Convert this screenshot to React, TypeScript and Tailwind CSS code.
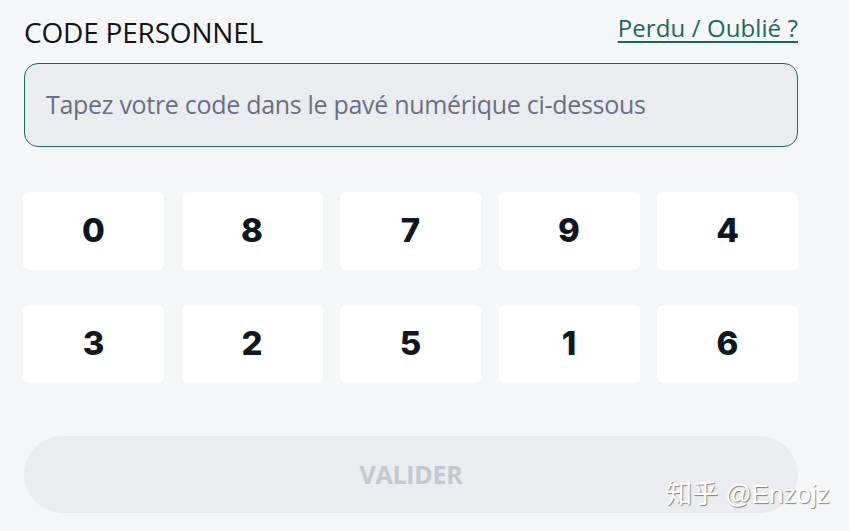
import React from 'react';

const keys = ['0', '8', '7', '9', '4', '3', '2', '5', '1', '6'];

const Key: React.FC<{ digit: string }> = ({ digit }) => (
  <button
    type="button"
    className="h-[78px] rounded-md bg-white flex items-center justify-center text-[33px] font-extrabold text-[#0f1720] font-['Inter',sans-serif]"
  >
    {digit}
  </button>
);

export default function App() {
  return (
    <div className="relative w-[849px] h-[531px] overflow-hidden bg-[#f5f6f8] font-['Open_Sans',sans-serif]">
      <div className="pl-[23px] pr-[51px] pt-[13px]">
        <div className="flex items-end justify-between pl-px">
          <h2 className="text-[28px] leading-[38px] text-[#141414] tracking-[-0.2px]">CODE PERSONNEL</h2>
          <a className="text-[24px] leading-[30px] text-[#186b58] tracking-[0.1px] underline underline-offset-[4px] mb-[8px]">Perdu / Oublié ?</a>
        </div>
        <div className="mt-[12px] ml-px h-[84px] rounded-[14px] border border-[#1d6b5c] bg-[#eaecf0] flex items-center px-[21px]">
          <span className="text-[25px] text-[#6b6e84] tracking-[-0.3px]">Tapez votre code dans le pavé numérique ci-dessous</span>
        </div>
        <div className="mt-[45px] grid grid-cols-5 gap-x-[17.5px] gap-y-[35px]">
          {keys.map((k) => (
            <Key key={k} digit={k} />
          ))}
        </div>
        <button
          type="button"
          className="mt-[53px] ml-px w-[774px] h-[77px] rounded-full bg-[#ebecef] text-[25px] font-bold text-[#c6c8d0] tracking-[-0.3px]"
        >
          VALIDER
        </button>
      </div>
      <div className="absolute left-[666px] top-[475px] text-[26px] text-white font-['Liberation_Sans','Noto_Sans_CJK_SC',sans-serif] [text-shadow:1px_1px_1px_rgba(0,0,0,0.45)]">
        知乎 @Enzojz
      </div>
    </div>
  );
}
